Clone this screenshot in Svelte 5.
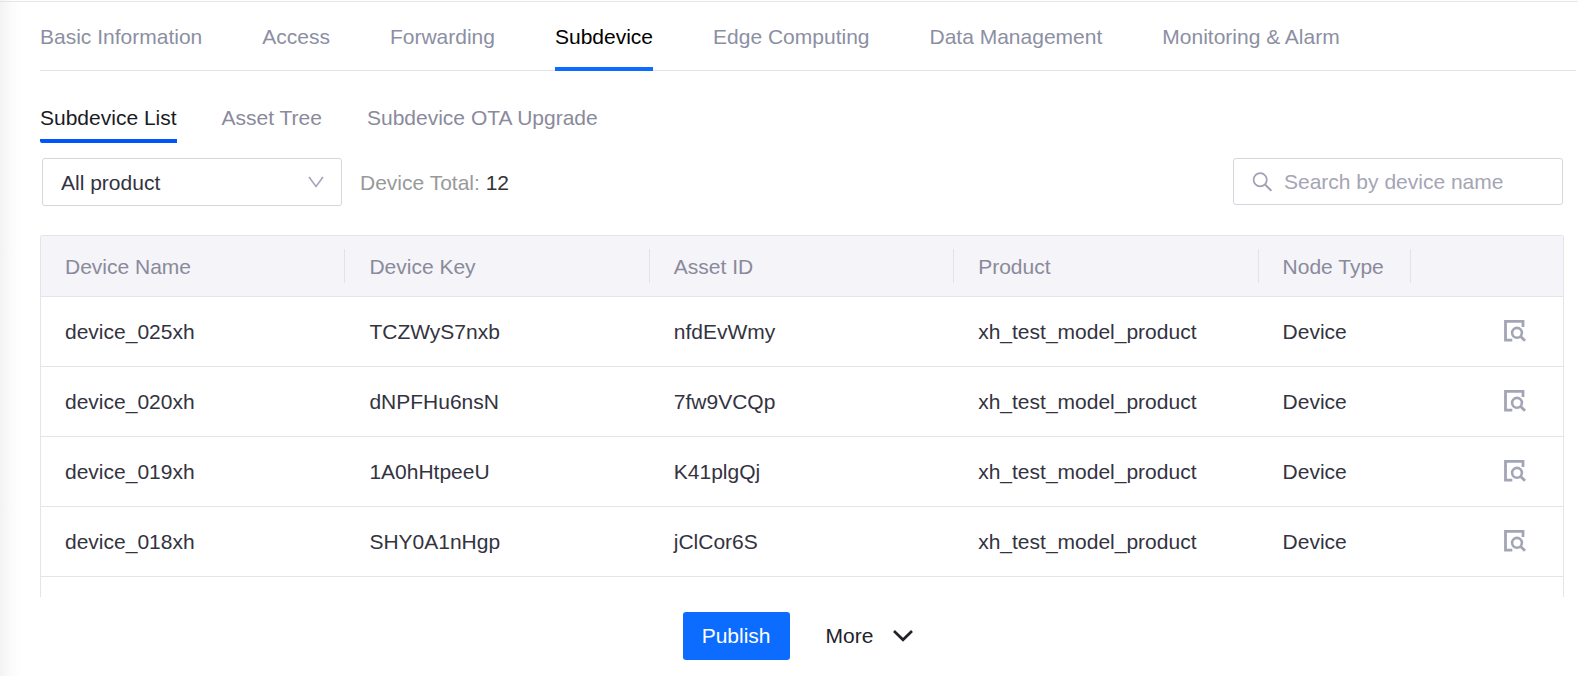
<script lang="ts">
  const tabs = [
    'Basic Information',
    'Access',
    'Forwarding',
    'Subdevice',
    'Edge Computing',
    'Data Management',
    'Monitoring & Alarm',
  ];
  const views = ['Subdevice List', 'Asset Tree', 'Subdevice OTA Upgrade'];
  const columns = ['Device Name', 'Device Key', 'Asset ID', 'Product', 'Node Type'];

  const devices = [
    { name: 'device_025xh', key: 'TCZWyS7nxb', asset: 'nfdEvWmy' },
    { name: 'device_020xh', key: 'dNPFHu6nsN', asset: '7fw9VCQp' },
    { name: 'device_019xh', key: '1A0hHtpeeU', asset: 'K41plgQj' },
    { name: 'device_018xh', key: 'SHY0A1nHgp', asset: 'jClCor6S' },
  ];

  let activeTab = $state('Subdevice');
  let activeView = $state('Subdevice List');
  let search = $state('');
</script>

<div class="page">
  <nav class="tabs">
    {#each tabs as tab}
      <a
        href="#{tab.toLowerCase().replaceAll(' ', '-')}"
        class="tab"
        class:active={tab === activeTab}
        onclick={() => (activeTab = tab)}>{tab}</a>
    {/each}
  </nav>

  <main class="content">
    <div class="views" role="tablist">
      {#each views as view}
        <button
          type="button"
          role="tab"
          aria-selected={view === activeView}
          class="view"
          class:active={view === activeView}
          onclick={() => (activeView = view)}>{view}</button>
      {/each}
    </div>

    <div class="toolbar">
      <div class="select">
        <select aria-label="Product">
          <option>All product</option>
        </select>
        <svg width="16" height="12" viewBox="0 0 16 12" fill="none" aria-hidden="true">
          <path d="M1 1 L8 10.5 L15 1" stroke="#a3a5b8" stroke-width="1.6" />
        </svg>
      </div>
      <p class="total">Device Total: <span>12</span></p>
      <label class="search">
        <svg width="20" height="20" viewBox="0 0 20 20" fill="none" aria-hidden="true">
          <circle cx="8.2" cy="7.7" r="6.6" stroke="#9fa1b3" stroke-width="1.7" />
          <path d="M13 12.5 L19.4 18.9" stroke="#9fa1b3" stroke-width="2" />
        </svg>
        <input type="text" aria-label="Search by device name" placeholder="Search by device name" bind:value={search} />
      </label>
    </div>

    <div class="table-wrap">
      <table>
        <thead>
          <tr>
            {#each columns as column, i}
              <th class:narrow={i === 4}>{column}</th>
            {/each}
            <th class="narrow" aria-label="Actions"></th>
          </tr>
        </thead>
        <tbody>
          {#each devices as device}
            <tr>
              <td>{device.name}</td>
              <td>{device.key}</td>
              <td>{device.asset}</td>
              <td>xh_test_model_product</td>
              <td>Device</td>
              <td class="actions">
                <button type="button" class="detail" aria-label="View details">
                  <svg width="22" height="22" viewBox="0 0 22 22" fill="none" stroke="#a3a5b5" aria-hidden="true">
                    <path d="M19 7 V1.4 H1.5 V20.2 H8.3" stroke-width="2.8" />
                    <circle cx="13" cy="12.8" r="4.9" stroke-width="2.6" />
                    <path d="M16.4 16.2 L21 20.8" stroke-width="2.8" />
                  </svg>
                </button>
              </td>
            </tr>
          {/each}
        </tbody>
      </table>
    </div>
  </main>

  <footer class="footer">
    <button type="button" class="publish">Publish</button>
    <button type="button" class="more">
      More
      <svg width="20" height="12" viewBox="0 0 20 12" fill="none" aria-hidden="true">
        <path d="M1 1 L10 9.8 L19 1" stroke="#22222c" stroke-width="2.7" />
      </svg>
    </button>
  </footer>
</div>

<style>
  :global(body) {
    background: #fff;
  }

  .page {
    box-sizing: border-box;
    display: flex;
    flex-direction: column;
    height: 100vh;
    padding-top: 1px;
    overflow: hidden;
    background: linear-gradient(90deg, #f3f3f3, #fbfbfb 11px, #fff 22px);
    font-family: Arial, 'Liberation Sans', sans-serif;
    font-size: 21px;
    line-height: 24px;
    color: #33333f;
  }

  button,
  select,
  input {
    margin: 0;
    padding: 0;
    border: 0;
    background: none;
    color: inherit;
    font: inherit;
  }

  button {
    cursor: pointer;
  }

  svg {
    display: block;
    flex: none;
  }

  .tabs {
    display: flex;
    gap: 60px;
    padding: 0 2px 0 40px;
    border-top: 1px solid #e6e6e8;
    background: linear-gradient(#e4e4e8, #e4e4e8) 40px 100% / calc(100% - 42px) 1px no-repeat;
  }

  .tab {
    padding: 23px 0 18px;
    border-bottom: 4px solid transparent;
    color: #8c8fa3;
    text-decoration: none;
    white-space: nowrap;
  }

  .tab.active {
    border-color: #0b6cff;
    color: #000;
  }

  .content {
    display: flex;
    flex: 1;
    flex-direction: column;
    min-height: 0;
    padding: 35px 14px 0 40px;
  }

  .views {
    display: flex;
    gap: 45px;
  }

  .view {
    padding-bottom: 9px;
    border-bottom: 4px solid transparent;
    color: #8a8a9c;
    white-space: nowrap;
  }

  .view.active {
    border-color: #0055ff;
    border-radius: 0 0 0 2px;
    color: #1b1b24;
  }

  .toolbar {
    display: flex;
    align-items: center;
    padding: 15px 1px 29px 2px;
  }

  .select {
    position: relative;
    width: 300px;
  }

  .select select {
    box-sizing: border-box;
    width: 100%;
    height: 48px;
    padding: 1px 40px 0 18px;
    appearance: none;
    border: 1px solid #d5d5de;
    border-radius: 3px;
    background: #fff;
  }

  .select svg {
    position: absolute;
    top: 18px;
    right: 18px;
    pointer-events: none;
  }

  .total {
    margin: 1px 0 0 18px;
    color: #999;
  }

  .total span {
    color: #333;
  }

  .search {
    box-sizing: border-box;
    display: flex;
    align-items: center;
    gap: 12px;
    width: 330px;
    height: 47px;
    margin: 0 0 1px auto;
    padding: 0 18px;
    border: 1px solid #d5d5de;
    border-radius: 3px;
    background: #fff;
  }

  .search input {
    flex: 1;
    min-width: 0;
    outline: none;
  }

  .search input::placeholder {
    color: #a5a5b5;
  }

  .table-wrap {
    flex: 1;
    min-height: 0;
    overflow: hidden;
    border: 1px solid #e4e4ea;
    border-bottom: 0;
    border-radius: 3px 3px 0 0;
  }

  table {
    width: 100%;
    table-layout: fixed;
    border-collapse: separate;
    border-spacing: 0;
  }

  th,
  td {
    box-sizing: border-box;
    padding: 0 0 0 24px;
    border-bottom: 1px solid #e4e4ea;
    text-align: left;
    white-space: nowrap;
  }

  th {
    width: 20%;
    height: 61px;
    padding-top: 2px;
    background: linear-gradient(#e2e2e8, #e2e2e8) right center / 1px 34px no-repeat #f4f4f9;
    color: #8a8a9a;
    font-weight: 400;
  }

  th.narrow {
    width: 10%;
  }

  th:last-child {
    background: #f4f4f9;
  }

  td {
    height: 70px;
  }

  td.actions {
    padding: 0 37px 2px 0;
  }

  .detail {
    display: block;
    margin-left: auto;
  }

  .footer {
    display: flex;
    justify-content: center;
    gap: 36px;
    padding: 15px 0 16px 18px;
  }

  .publish {
    height: 48px;
    padding: 0 19px;
    border-radius: 3px;
    background: #0b6cff;
    color: #fff;
  }

  .more {
    display: flex;
    align-items: center;
    gap: 20px;
    color: #22222c;
  }
</style>
